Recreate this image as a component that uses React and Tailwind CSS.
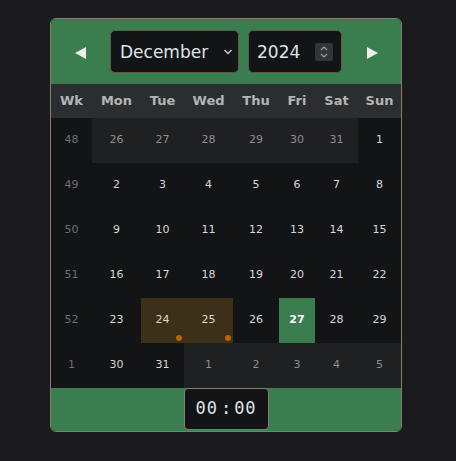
import React from "react";

const cols = "grid grid-cols-[41px_49px_43px_49px_46px_36px_43px_43px]";

const weeks = [
  { wk: 48, days: [[26, "o"], [27, "o"], [28, "o"], [29, "o"], [30, "o"], [31, "o"], [1, "c"]] },
  { wk: 49, days: [[2, "c"], [3, "c"], [4, "c"], [5, "c"], [6, "c"], [7, "c"], [8, "c"]] },
  { wk: 50, days: [[9, "c"], [10, "c"], [11, "c"], [12, "c"], [13, "c"], [14, "c"], [15, "c"]] },
  { wk: 51, days: [[16, "c"], [17, "c"], [18, "c"], [19, "c"], [20, "c"], [21, "c"], [22, "c"]] },
  { wk: 52, days: [[23, "c"], [24, "h"], [25, "h"], [26, "c"], [27, "t"], [28, "c"], [29, "c"]] },
  { wk: 1, days: [[30, "c"], [31, "c"], [1, "o"], [2, "o"], [3, "o"], [4, "o"], [5, "o"]] },
];

function Cell({ n, kind }) {
  if (kind === "o")
    return (
      <div className="h-[45px] flex items-center justify-center bg-[#1f2022] text-[#8e8e8e]">{n}</div>
    );
  if (kind === "h")
    return (
      <div className="relative h-[45px] flex items-center justify-center bg-[#3d3018] text-[#d8d8d8]">
        {n}
        <span className="absolute right-[2px] bottom-[2px] w-[6px] h-[6px] rounded-full bg-[#b86400]" />
      </div>
    );
  if (kind === "t")
    return (
      <div className="h-[45px] flex items-center justify-center bg-[#3a7d4f] text-white font-bold">{n}</div>
    );
  return <div className="h-[45px] flex items-center justify-center text-[#d8d8d8]">{n}</div>;
}

export default function App() {
  return (
    <div className="min-h-screen w-full bg-[#1b1b1d] pl-[50px] pt-[18px] font-['DejaVu_Sans',sans-serif]">
      <div className="w-[352px] border border-[#857d6e] rounded-[6px] overflow-hidden bg-[#131416]">
        {/* header */}
        <div className="h-[65px] bg-[#3a7d4f] flex items-center">
          <div className="w-[59px] flex justify-center pt-[2px]">
            <svg width="12" height="12" viewBox="0 0 12 12">
              <polygon points="11,0 11,12 0,6" fill="#eeeeee" />
            </svg>
          </div>
          <div className="w-[129px] h-[43px] rounded-[5px] border border-[#5f5a50] bg-[#131416] flex items-center pl-[9px] pr-[5px]">
            <span className="flex-1 text-[17px] text-[#dfe3ea] pt-[2px]">December</span>
            <svg width="10" height="8" viewBox="0 0 10 8">
              <polyline points="1.5,2 5,5.5 8.5,2" fill="none" stroke="#c8ccd2" strokeWidth="1.4" />
            </svg>
          </div>
          <div className="w-[9px]" />
          <div className="w-[94px] h-[43px] rounded-[5px] border border-[#5f5a50] bg-[#131416] flex items-center pl-[8px] pr-[8px]">
            <span className="flex-1 text-[17px] text-[#dfe3ea] pt-[2px]">2024</span>
            <div className="w-[18px] h-[18px] rounded-[2px] bg-[#33333b] flex flex-col items-center justify-center">
              <svg width="10" height="16" viewBox="0 0 10 16">
                <polyline points="2,6 5,3 8,6" fill="none" stroke="#9a9aa2" strokeWidth="1.2" />
                <polyline points="2,10 5,13 8,10" fill="none" stroke="#9a9aa2" strokeWidth="1.2" />
              </svg>
            </div>
          </div>
          <div className="w-[59px] flex justify-center pt-[2px]">
            <svg width="12" height="12" viewBox="0 0 12 12">
              <polygon points="1,0 1,12 12,6" fill="#eeeeee" />
            </svg>
          </div>
        </div>

        {/* weekday row */}
        <div className={`${cols} h-[34px] bg-[#2b2e31] text-[13px] font-bold text-[#b4b4b4]`}>
          {["Wk", "Mon", "Tue", "Wed", "Thu", "Fri", "Sat", "Sun"].map((d) => (
            <div key={d} className="flex items-center justify-center">{d}</div>
          ))}
        </div>

        {/* weeks */}
        <div className="text-[11px]">
          {weeks.map((w) => (
            <div key={w.wk} className={cols}>
              <div className="h-[45px] flex items-center justify-center text-[#6e6e6e]">{w.wk}</div>
              {w.days.map(([n, k], i) => (
                <Cell key={i} n={n} kind={k} />
              ))}
            </div>
          ))}
        </div>

        {/* footer */}
        <div className="h-[43px] bg-[#3a7d4f] flex justify-center">
          <div className="w-[85px] h-[42px] rounded-[4px] border border-[#857d6e] bg-[#131416] flex items-center justify-center font-['DejaVu_Sans_Mono',monospace] text-[17px] text-[#dfe3ea]">
            <span className="tracking-[1px]">00</span>
            <span className="mx-[3px]">:</span>
            <span className="tracking-[1px]">00</span>
          </div>
        </div>
      </div>
    </div>
  );
}
